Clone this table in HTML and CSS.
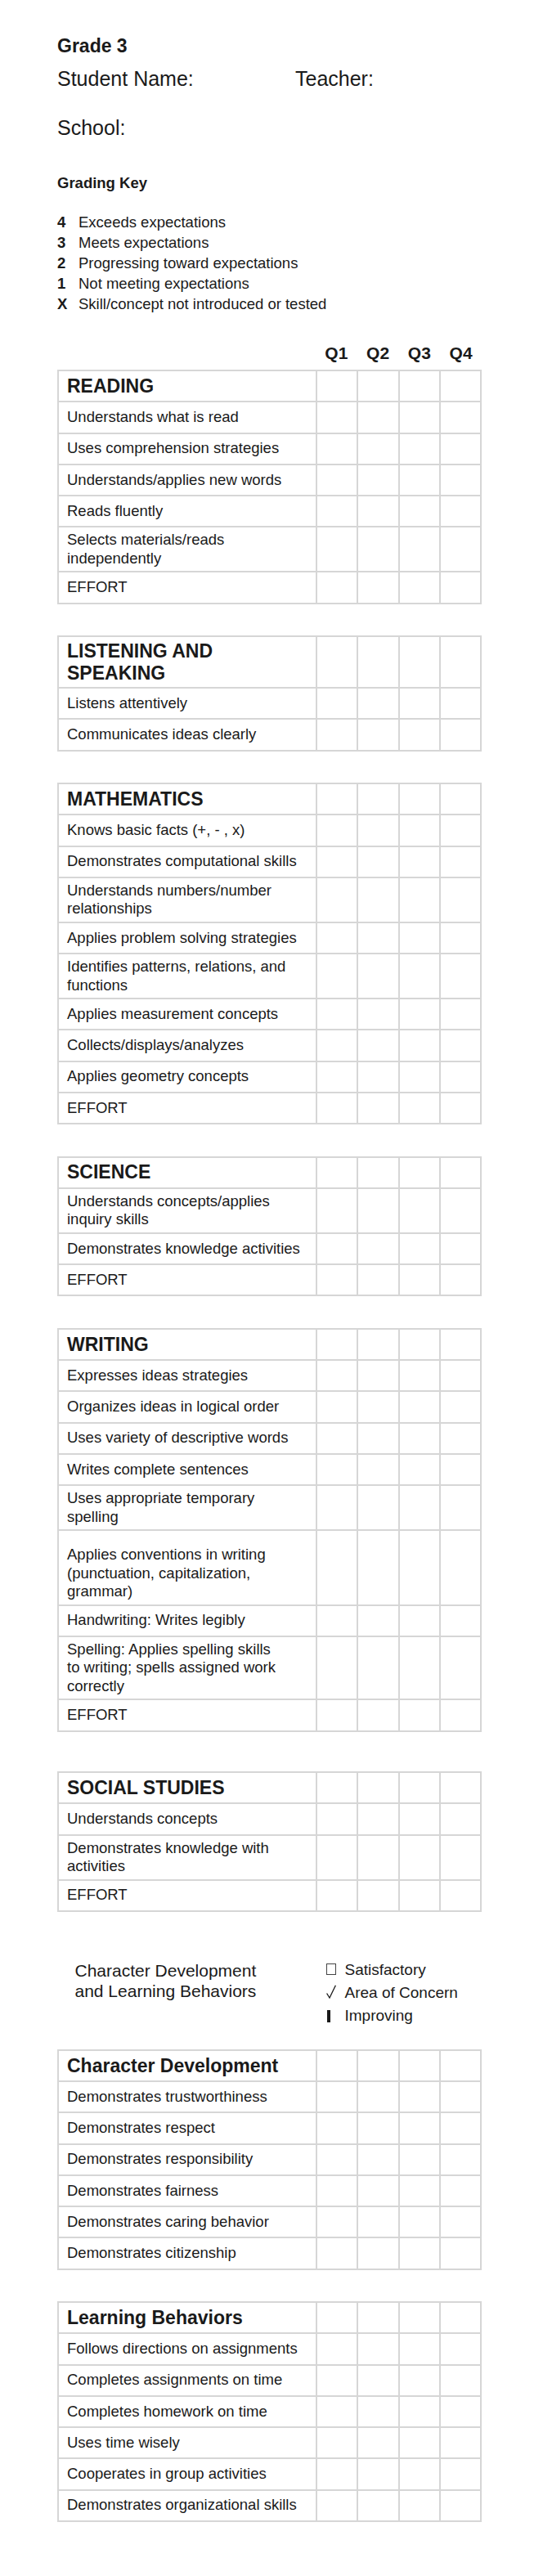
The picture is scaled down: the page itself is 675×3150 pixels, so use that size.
FILE: index.html
```html
<!DOCTYPE html>
<html lang="en">
<head>
<meta charset="utf-8">
<title>Grade 3 Report Card</title>
<link rel="stylesheet" href="styles.css">
</head>
<body>
<div class="page">
  <h1 class="grade">Grade 3</h1>
  <div class="names"><span class="name-field">Student Name:</span><span>Teacher:</span></div>
  <div class="school">School:</div>

  <h2 class="key-title">Grading Key</h2>
  <ul class="key">
    <li><b>4</b>Exceeds expectations</li>
    <li><b>3</b>Meets expectations</li>
    <li><b>2</b>Progressing toward expectations</li>
    <li><b>1</b>Not meeting expectations</li>
    <li><b>X</b>Skill/concept not introduced or tested</li>
  </ul>

  <div class="qhead"><span class="qspacer"></span><span>Q1</span><span>Q2</span><span>Q3</span><span>Q4</span></div>

  <table class="grid first">
    <colgroup><col class="c-label"><col><col><col><col></colgroup>
    <tr class="head"><th>READING</th><td></td><td></td><td></td><td></td></tr>
    <tr><td>Understands what is read</td><td></td><td></td><td></td><td></td></tr>
    <tr><td>Uses comprehension strategies</td><td></td><td></td><td></td><td></td></tr>
    <tr><td>Understands/applies new words</td><td></td><td></td><td></td><td></td></tr>
    <tr><td>Reads fluently</td><td></td><td></td><td></td><td></td></tr>
    <tr><td>Selects materials/reads<br>independently</td><td></td><td></td><td></td><td></td></tr>
    <tr><td>EFFORT</td><td></td><td></td><td></td><td></td></tr>
  </table>

  <table class="grid">
    <colgroup><col class="c-label"><col><col><col><col></colgroup>
    <tr class="head"><th>LISTENING AND<br>SPEAKING</th><td></td><td></td><td></td><td></td></tr>
    <tr><td>Listens attentively</td><td></td><td></td><td></td><td></td></tr>
    <tr><td>Communicates ideas clearly</td><td></td><td></td><td></td><td></td></tr>
  </table>

  <table class="grid">
    <colgroup><col class="c-label"><col><col><col><col></colgroup>
    <tr class="head"><th>MATHEMATICS</th><td></td><td></td><td></td><td></td></tr>
    <tr><td>Knows basic facts (+, - , x)</td><td></td><td></td><td></td><td></td></tr>
    <tr><td>Demonstrates computational skills</td><td></td><td></td><td></td><td></td></tr>
    <tr><td>Understands numbers/number<br>relationships</td><td></td><td></td><td></td><td></td></tr>
    <tr><td>Applies problem solving strategies</td><td></td><td></td><td></td><td></td></tr>
    <tr><td>Identifies patterns, relations, and<br>functions</td><td></td><td></td><td></td><td></td></tr>
    <tr><td>Applies measurement concepts</td><td></td><td></td><td></td><td></td></tr>
    <tr><td>Collects/displays/analyzes</td><td></td><td></td><td></td><td></td></tr>
    <tr><td>Applies geometry concepts</td><td></td><td></td><td></td><td></td></tr>
    <tr><td>EFFORT</td><td></td><td></td><td></td><td></td></tr>
  </table>

  <table class="grid">
    <colgroup><col class="c-label"><col><col><col><col></colgroup>
    <tr class="head"><th>SCIENCE</th><td></td><td></td><td></td><td></td></tr>
    <tr><td>Understands concepts/applies<br>inquiry skills</td><td></td><td></td><td></td><td></td></tr>
    <tr><td>Demonstrates knowledge activities</td><td></td><td></td><td></td><td></td></tr>
    <tr><td>EFFORT</td><td></td><td></td><td></td><td></td></tr>
  </table>

  <table class="grid">
    <colgroup><col class="c-label"><col><col><col><col></colgroup>
    <tr class="head"><th>WRITING</th><td></td><td></td><td></td><td></td></tr>
    <tr><td>Expresses ideas strategies</td><td></td><td></td><td></td><td></td></tr>
    <tr><td>Organizes ideas in logical order</td><td></td><td></td><td></td><td></td></tr>
    <tr><td>Uses variety of descriptive words</td><td></td><td></td><td></td><td></td></tr>
    <tr><td>Writes complete sentences</td><td></td><td></td><td></td><td></td></tr>
    <tr><td>Uses appropriate temporary<br>spelling</td><td></td><td></td><td></td><td></td></tr>
    <tr><td class="tall">Applies conventions in writing<br>(punctuation, capitalization,<br>grammar)</td><td></td><td></td><td></td><td></td></tr>
    <tr><td>Handwriting: Writes legibly</td><td></td><td></td><td></td><td></td></tr>
    <tr><td>Spelling: Applies spelling skills<br>to writing; spells assigned work<br>correctly</td><td></td><td></td><td></td><td></td></tr>
    <tr><td>EFFORT</td><td></td><td></td><td></td><td></td></tr>
  </table>

  <table class="grid gap-lg">
    <colgroup><col class="c-label"><col><col><col><col></colgroup>
    <tr class="head"><th>SOCIAL STUDIES</th><td></td><td></td><td></td><td></td></tr>
    <tr><td>Understands concepts</td><td></td><td></td><td></td><td></td></tr>
    <tr><td>Demonstrates knowledge with<br>activities</td><td></td><td></td><td></td><td></td></tr>
    <tr><td>EFFORT</td><td></td><td></td><td></td><td></td></tr>
  </table>

  <div class="legend">
    <div class="legend-title">Character Development<br>and Learning Behaviors</div>
    <ul class="legend-keys">
      <li><span class="mark"><span class="box"></span></span>Satisfactory</li>
      <li><span class="mark"><svg class="check" width="12" height="17" viewBox="0 0 12 17"><polyline points="0.6,10.5 4,16 11.4,0.8" fill="none" stroke="#1a1a1a" stroke-width="1.3" stroke-linejoin="miter"/></svg></span>Area of Concern</li>
      <li><span class="mark"><span class="bar"></span></span>Improving</li>
    </ul>
  </div>

  <table class="grid after-legend">
    <colgroup><col class="c-label"><col><col><col><col></colgroup>
    <tr class="head"><th>Character Development</th><td></td><td></td><td></td><td></td></tr>
    <tr><td>Demonstrates trustworthiness</td><td></td><td></td><td></td><td></td></tr>
    <tr><td>Demonstrates respect</td><td></td><td></td><td></td><td></td></tr>
    <tr><td>Demonstrates responsibility</td><td></td><td></td><td></td><td></td></tr>
    <tr><td>Demonstrates fairness</td><td></td><td></td><td></td><td></td></tr>
    <tr><td>Demonstrates caring behavior</td><td></td><td></td><td></td><td></td></tr>
    <tr><td>Demonstrates citizenship</td><td></td><td></td><td></td><td></td></tr>
  </table>

  <table class="grid">
    <colgroup><col class="c-label"><col><col><col><col></colgroup>
    <tr class="head"><th>Learning Behaviors</th><td></td><td></td><td></td><td></td></tr>
    <tr><td>Follows directions on assignments</td><td></td><td></td><td></td><td></td></tr>
    <tr><td>Completes assignments on time</td><td></td><td></td><td></td><td></td></tr>
    <tr><td>Completes homework on time</td><td></td><td></td><td></td><td></td></tr>
    <tr><td>Uses time wisely</td><td></td><td></td><td></td><td></td></tr>
    <tr><td>Cooperates in group activities</td><td></td><td></td><td></td><td></td></tr>
    <tr><td>Demonstrates organizational skills</td><td></td><td></td><td></td><td></td></tr>
  </table>
</div>
</body>
</html>
```

FILE: styles.css
```css
* { box-sizing: border-box; }

html, body {
  margin: 0;
  padding: 0;
  background: #ffffff;
}

body {
  font-family: "Liberation Sans", Arial, Helvetica, sans-serif;
  color: #1a1a1a;
}

.page {
  padding: 42px 0 60px 70px;
  width: 675px;
}

.grade {
  margin: 0;
  font-size: 23px;
  line-height: 28px;
  font-weight: bold;
}

.names {
  display: flex;
  margin-top: 11px;
  font-size: 25px;
  line-height: 30px;
}

.name-field {
  width: 291px;
}

.school {
  margin-top: 30px;
  font-size: 25px;
  line-height: 30px;
}

.key-title {
  margin: 42px 0 0;
  font-size: 18.5px;
  line-height: 22px;
  font-weight: bold;
}

.key {
  list-style: none;
  margin: 24px 0 0;
  padding: 0;
  font-size: 18.5px;
  line-height: 25px;
}

.key b {
  display: inline-block;
  width: 26px;
}

.qhead {
  display: flex;
  margin-top: 36px;
  width: 519px;
  font-size: 21px;
  line-height: 24px;
  font-weight: bold;
}

.qhead span {
  flex: 1 1 0;
  text-align: center;
}

.qhead .qspacer {
  flex: 0 0 316px;
}

.grid {
  border-collapse: collapse;
  table-layout: fixed;
  width: 519px;
  margin-top: 38.5px;
}

.grid.first {
  margin-top: 8px;
}

.grid.gap-lg {
  margin-top: 48.5px;
}

.grid.after-legend {
  margin-top: 27px;
}

.c-label {
  width: 316px;
}

.grid td,
.grid th {
  box-sizing: content-box;
  border: 2px solid #d6d6d6;
  height: 28.25px;
  padding: 4px 10px;
  vertical-align: middle;
  text-align: left;
  font-size: 18.5px;
  line-height: 22.5px;
  font-weight: normal;
}

.grid th {
  font-size: 23px;
  line-height: 26.5px;
  font-weight: bold;
}

.grid td.tall {
  padding-top: 18px;
}

.legend {
  display: flex;
  margin-top: 57px;
  padding-left: 21.5px;
}

.legend-title {
  width: 307.5px;
  padding-top: 2px;
  font-size: 21px;
  line-height: 25px;
}

.legend-keys {
  list-style: none;
  margin: 0;
  padding: 0;
  font-size: 19px;
  line-height: 28px;
}

.legend-keys li {
  display: flex;
  align-items: center;
}

.mark {
  width: 22.5px;
  height: 28px;
  display: flex;
  align-items: center;
}

.box {
  width: 12px;
  height: 14px;
  border: 1px solid #444;
  margin-top: -1px;
}

.check {
  display: block;
  margin-top: -2px;
}

.bar {
  width: 4px;
  height: 15px;
  margin-left: 1px;
  background: #1a1a1a;
  margin-top: 1px;
}
```
